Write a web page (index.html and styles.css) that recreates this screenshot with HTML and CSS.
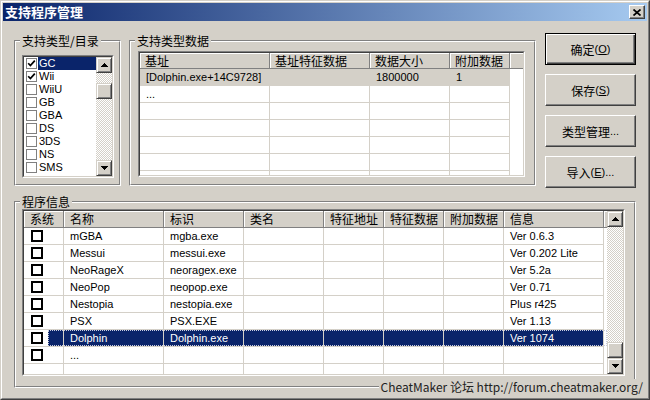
FILE: index.html
```html
<!DOCTYPE html>
<html>
<head>
<meta charset="utf-8">
<link rel="stylesheet" href="styles.css">
</head>
<body>
<div class="window">
  <div class="window-in">
    <div class="titlebar">
      <span class="title">支持程序管理</span>
      <div class="close"><svg width="8" height="7" viewBox="0 0 8 7"><path d="M0.5 0.5 L7.5 6.5 M7.5 0.5 L0.5 6.5" stroke="#000" stroke-width="1.7" fill="none"/></svg></div>
    </div>
    <div class="content">
      <div class="toprow">
        <div class="group g1">
          <span class="legend">支持类型/目录</span>
          <div class="group-in">
            <div class="sunken listbox">
              <div class="sunken-in">
                <ul class="items">
                  <li class="sel"><span class="cb"><svg width="9" height="9" viewBox="0 0 9 9"><path d="M1.2 4.2 L3.4 6.6 L7.8 1.6" fill="none" stroke="#000" stroke-width="1.7"/></svg></span><span class="lbl">GC</span></li>
                  <li><span class="cb"><svg width="9" height="9" viewBox="0 0 9 9"><path d="M1.2 4.2 L3.4 6.6 L7.8 1.6" fill="none" stroke="#000" stroke-width="1.7"/></svg></span><span class="lbl">Wii</span></li>
                  <li><span class="cb"></span><span class="lbl">WiiU</span></li>
                  <li><span class="cb"></span><span class="lbl">GB</span></li>
                  <li><span class="cb"></span><span class="lbl">GBA</span></li>
                  <li><span class="cb"></span><span class="lbl">DS</span></li>
                  <li><span class="cb"></span><span class="lbl">3DS</span></li>
                  <li><span class="cb"></span><span class="lbl">NS</span></li>
                  <li><span class="cb"></span><span class="lbl">SMS</span></li>
                </ul>
                <div class="vscroll">
                  <div class="sbtn"><svg width="7" height="4" viewBox="0 0 7 4" shape-rendering="crispEdges"><path d="M3 0h1v1h1v1h1v1h1v1H0V3h1V2h1V1h1z"/></svg></div>
                  <div class="track"><div class="sbtn thumb1"></div></div>
                  <div class="sbtn"><svg width="7" height="4" viewBox="0 0 7 4" shape-rendering="crispEdges"><path d="M0 0h7v1H6v1H5v1H4v1H3V3H2V2H1V1H0z"/></svg></div>
                </div>
              </div>
            </div>
          </div>
        </div>

        <div class="group g2">
          <span class="legend">支持类型数据</span>
          <div class="group-in">
            <div class="sunken lv1">
              <div class="sunken-in lv-col">
                <div class="hdr">
                  <div class="h" style="width:130px">基址</div>
                  <div class="h" style="width:100px">基址特征数据</div>
                  <div class="h" style="width:80px">数据大小</div>
                  <div class="h" style="width:60px">附加数据</div>
                  <div class="hfill"></div>
                </div>
                <div class="row grey">
                  <div class="c" style="width:130px">[Dolphin.exe+14C9728]</div>
                  <div class="c" style="width:100px"></div>
                  <div class="c" style="width:80px">1800000</div>
                  <div class="c" style="width:60px">1</div>
                </div>
                <div class="row">
                  <div class="c" style="width:130px">...</div>
                  <div class="c" style="width:100px"></div>
                  <div class="c" style="width:80px"></div>
                  <div class="c" style="width:60px"></div>
                </div>
                <div class="row"><div class="c" style="width:130px"></div><div class="c" style="width:100px"></div><div class="c" style="width:80px"></div><div class="c" style="width:60px"></div></div>
                <div class="row"><div class="c" style="width:130px"></div><div class="c" style="width:100px"></div><div class="c" style="width:80px"></div><div class="c" style="width:60px"></div></div>
                <div class="row"><div class="c" style="width:130px"></div><div class="c" style="width:100px"></div><div class="c" style="width:80px"></div><div class="c" style="width:60px"></div></div>
                <div class="row"><div class="c" style="width:130px"></div><div class="c" style="width:100px"></div><div class="c" style="width:80px"></div><div class="c" style="width:60px"></div></div>
                <div class="row"><div class="c" style="width:130px"></div><div class="c" style="width:100px"></div><div class="c" style="width:80px"></div><div class="c" style="width:60px"></div></div>
              </div>
            </div>
          </div>
        </div>

        <div class="btncol">
          <div class="btn def">确定<span class="en">(<u>O</u>)</span></div>
          <div class="btn">保存<span class="en">(<u>S</u>)</span></div>
          <div class="btn">类型管理<span class="en">...</span></div>
          <div class="btn">导入<span class="en">(<u>E</u>)...</span></div>
        </div>
      </div>

      <div class="group g3">
        <span class="legend">程序信息</span>
        <div class="group-in">
          <div class="sunken lv2">
            <div class="sunken-in lv2-in">
              <div class="lv-col main">
                <div class="hdr h17">
                  <div class="h" style="width:40px">系统</div>
                  <div class="h" style="width:100px">名称</div>
                  <div class="h" style="width:80px">标识</div>
                  <div class="h" style="width:80px">类名</div>
                  <div class="h" style="width:60px">特征地址</div>
                  <div class="h" style="width:60px">特征数据</div>
                  <div class="h" style="width:60px">附加数据</div>
                  <div class="h" style="width:100px">信息</div>
                  <div class="hfill"></div>
                </div>
                <div class="row"><div class="c sys"><span class="bx"></span><span class="sl"></span></div><div class="c" style="width:100px">mGBA</div><div class="c" style="width:80px">mgba.exe</div><div class="c" style="width:80px"></div><div class="c" style="width:60px"></div><div class="c" style="width:60px"></div><div class="c" style="width:60px"></div><div class="c" style="width:100px">Ver 0.6.3</div></div>
                <div class="row"><div class="c sys"><span class="bx"></span><span class="sl"></span></div><div class="c" style="width:100px">Messui</div><div class="c" style="width:80px">messui.exe</div><div class="c" style="width:80px"></div><div class="c" style="width:60px"></div><div class="c" style="width:60px"></div><div class="c" style="width:60px"></div><div class="c" style="width:100px">Ver 0.202 Lite</div></div>
                <div class="row"><div class="c sys"><span class="bx"></span><span class="sl"></span></div><div class="c" style="width:100px">NeoRageX</div><div class="c" style="width:80px">neoragex.exe</div><div class="c" style="width:80px"></div><div class="c" style="width:60px"></div><div class="c" style="width:60px"></div><div class="c" style="width:60px"></div><div class="c" style="width:100px">Ver 5.2a</div></div>
                <div class="row"><div class="c sys"><span class="bx"></span><span class="sl"></span></div><div class="c" style="width:100px">NeoPop</div><div class="c" style="width:80px">neopop.exe</div><div class="c" style="width:80px"></div><div class="c" style="width:60px"></div><div class="c" style="width:60px"></div><div class="c" style="width:60px"></div><div class="c" style="width:100px">Ver 0.71</div></div>
                <div class="row"><div class="c sys"><span class="bx"></span><span class="sl"></span></div><div class="c" style="width:100px">Nestopia</div><div class="c" style="width:80px">nestopia.exe</div><div class="c" style="width:80px"></div><div class="c" style="width:60px"></div><div class="c" style="width:60px"></div><div class="c" style="width:60px"></div><div class="c" style="width:100px">Plus r425</div></div>
                <div class="row"><div class="c sys"><span class="bx"></span><span class="sl"></span></div><div class="c" style="width:100px">PSX</div><div class="c" style="width:80px">PSX.EXE</div><div class="c" style="width:80px"></div><div class="c" style="width:60px"></div><div class="c" style="width:60px"></div><div class="c" style="width:60px"></div><div class="c" style="width:100px">Ver 1.13</div></div>
                <div class="row sel"><div class="c sys"><span class="bx"></span><span class="sl"></span></div><div class="c" style="width:100px">Dolphin</div><div class="c" style="width:80px">Dolphin.exe</div><div class="c" style="width:80px"></div><div class="c" style="width:60px"></div><div class="c" style="width:60px"></div><div class="c" style="width:60px"></div><div class="c" style="width:100px">Ver 1074</div></div>
                <div class="row"><div class="c sys"><span class="bx"></span><span class="sl"></span></div><div class="c" style="width:100px">...</div><div class="c" style="width:80px"></div><div class="c" style="width:80px"></div><div class="c" style="width:60px"></div><div class="c" style="width:60px"></div><div class="c" style="width:60px"></div><div class="c" style="width:100px"></div></div>
                <div class="row"><div class="c sys"></div><div class="c" style="width:100px"></div><div class="c" style="width:80px"></div><div class="c" style="width:80px"></div><div class="c" style="width:60px"></div><div class="c" style="width:60px"></div><div class="c" style="width:60px"></div><div class="c" style="width:100px"></div></div>
              </div>
              <div class="vscroll">
                <div class="sbtn"><svg width="7" height="4" viewBox="0 0 7 4" shape-rendering="crispEdges"><path d="M3 0h1v1h1v1h1v1h1v1H0V3h1V2h1V1h1z"/></svg></div>
                <div class="track end"><div class="sbtn"></div></div>
                <div class="sbtn"><svg width="7" height="4" viewBox="0 0 7 4" shape-rendering="crispEdges"><path d="M0 0h7v1H6v1H5v1H4v1H3V3H2V2H1V1H0z"/></svg></div>
              </div>
            </div>
          </div>
        </div>
      </div>
    </div>
    <div class="footer">CheatMaker 论坛 http://forum.cheatmaker.org/</div>
  </div>
</div>
</body>
</html>
```

FILE: styles.css
```css
* { box-sizing: border-box; margin: 0; padding: 0; }
html, body { width: 650px; height: 400px; overflow: hidden; }
body {
  background: #d4d0c8;
  font-family: "Liberation Sans", "Noto Sans CJK SC", sans-serif;
  font-size: 12px;
  color: #000;
}
.en { font-size: 11px; }

.window {
  width: 650px; height: 400px;
  border: 1px solid;
  border-color: #d4d0c8 #404040 #404040 #d4d0c8;
  background: #d4d0c8;
}
.window-in {
  position: relative;
  height: 100%;
  border: 1px solid;
  border-color: #fff #808080 #808080 #fff;
  padding: 1px;
}

.titlebar {
  height: 18px;
  display: flex;
  align-items: center;
  justify-content: space-between;
  padding: 0 2px;
  background: linear-gradient(to right, #0a246a, #a6caf0);
}
.title {
  color: #fff;
  font-family: "Noto Sans CJK SC", sans-serif;
  font-weight: bold;
  font-size: 13px;
  line-height: 18px;
}
.close {
  width: 16px; height: 14px;
  background: #d4d0c8;
  border: 1px solid;
  border-color: #fff #404040 #404040 #fff;
  box-shadow: inset -1px -1px #808080;
  display: flex; align-items: center; justify-content: center;
}

.content { padding: 12px 0 0 11px; }
.toprow { display: flex; align-items: flex-start; }

.group {
  position: relative;
  border: 1px solid;
  border-color: #808080 #fff #fff #808080;
}
.group-in {
  height: 100%;
  border: 1px solid;
  border-color: #fff #808080 #808080 #fff;
}
.legend {
  position: absolute;
  top: -7px; left: 5px;
  padding: 0 2px;
  line-height: 14px;
  background: #d4d0c8;
  font-family: "Noto Sans CJK SC", sans-serif;
  white-space: nowrap;
  z-index: 1;
}
.g1 { width: 107px; height: 146px; margin-top: 7px; }
.g1 .group-in { padding: 13px 0 0 6px; }
.g2 { width: 407px; height: 146px; margin-top: 7px; margin-left: 8px; }
.g2 .group-in { padding: 9px 0 0 7px; }
.g3 { width: 622px; height: 187px; margin-top: 13px; }
.g3 .group-in { padding: 6px 0 0 6px; }

.sunken {
  border: 1px solid;
  border-color: #808080 #fff #fff #808080;
}
.sunken-in {
  height: 100%;
  border: 1px solid;
  border-color: #404040 #d4d0c8 #d4d0c8 #404040;
  background: #fff;
  overflow: hidden;
}

/* listbox */
.listbox { width: 92px; height: 123px; }
.listbox .sunken-in { display: flex; }
.items { list-style: none; flex: 1; }
.items li { height: 13px; display: flex; align-items: center; padding-left: 2px; }
.cb {
  width: 11px; height: 11px; flex: none;
  border: 1px solid #808080;
  background: #fff;
  display: flex; align-items: center; justify-content: center;
}
.lbl {
  flex: 1;
  height: 13px;
  line-height: 13px;
  padding-left: 1px;
  margin-left: 1px;
  font-size: 11px;
}
.items li.sel .lbl { background: #0a246a; color: #fff; }

/* scrollbars */
.vscroll { width: 16px; flex: none; display: flex; flex-direction: column; }
.track {
  flex: 1;
  display: flex;
  flex-direction: column;
  background: repeating-conic-gradient(#fff 0 25%, #d4d0c8 0 50%) 0 0 / 2px 2px;
}
.track.end { justify-content: flex-end; }
.thumb1 { margin-top: 10px; }
.sbtn {
  width: 16px; height: 16px; flex: none;
  background: #d4d0c8;
  border: 1px solid;
  border-color: #d4d0c8 #404040 #404040 #d4d0c8;
  box-shadow: inset 1px 1px #fff, inset -1px -1px #808080;
  display: flex; align-items: center; justify-content: center;
}

/* list views */
.lv1 { width: 387px; height: 126px; }
.lv-col { display: flex; flex-direction: column; }
.hdr { display: flex; height: 16px; flex: none; background: #d4d0c8; }
.hdr.h17 { height: 17px; }
.hdr .h {
  flex: none;
  border-right: 1px solid #808080;
  border-bottom: 1px solid #808080;
  box-shadow: inset 1px 1px #fff;
  padding-left: 5px;
  font-family: "Noto Sans CJK SC", sans-serif;
  line-height: 15px;
  white-space: nowrap;
  overflow: hidden;
}
.hdr.h17 .h { line-height: 16px; padding-left: 6px; }
.hdr .hfill { flex: 1; border-bottom: 1px solid #808080; box-shadow: inset 1px 1px #fff; }

.row { display: flex; height: 17px; flex: none; }
.row .c {
  flex: none;
  height: 17px;
  border-right: 1px solid #d4d0c8;
  border-bottom: 1px solid #d4d0c8;
  padding-left: 6px;
  line-height: 16px;
  font-size: 11px;
  white-space: nowrap;
  overflow: hidden;
}
.row.grey .c { background: #d4d0c8; }

.lv2 { width: 603px; height: 167px; }
.lv2-in { display: flex; }
.lv2 .main { width: 583px; }
.row .c.sys {
  width: 40px;
  padding-left: 7px;
  display: flex;
  align-items: center;
}
.bx {
  width: 12px; height: 12px; flex: none;
  border: 2px solid #000;
  background: #fff;
}
.sl { flex: 1; height: 16px; margin-left: 5px; }
.row.sel { position: relative; }
.row.sel .sl { background: #0a246a; }
.row.sel .c:not(.sys) { background: #0a246a; color: #fff; }
.row.sel::after {
  content: "";
  position: absolute;
  left: 24px; right: 0; top: 0; bottom: 1px;
  border: 1px dotted #c8cce0;
}

/* buttons */
.btncol { margin-left: 9px; display: flex; flex-direction: column; gap: 9px; }
.btn {
  width: 91px; height: 32px;
  background: #d4d0c8;
  border: 1px solid;
  border-color: #fff #404040 #404040 #fff;
  box-shadow: inset -1px -1px #808080;
  display: flex; align-items: center; justify-content: center;
  font-family: "Noto Sans CJK SC", sans-serif;
  font-size: 12px;
}
.btn .en { font-family: "Liberation Sans", sans-serif; }
.btn.def {
  border-color: #000;
  box-shadow: inset 1px 1px #fff, inset -1px -1px #404040, inset -2px -2px #808080;
}

.footer {
  position: absolute;
  right: 5px; top: 377px;
  padding-left: 2px;
  background: #d4d0c8;
  color: #222;
  font-family: "Noto Sans CJK SC", sans-serif;
  font-size: 12px;
  line-height: 15px;
  white-space: nowrap;
}
```
